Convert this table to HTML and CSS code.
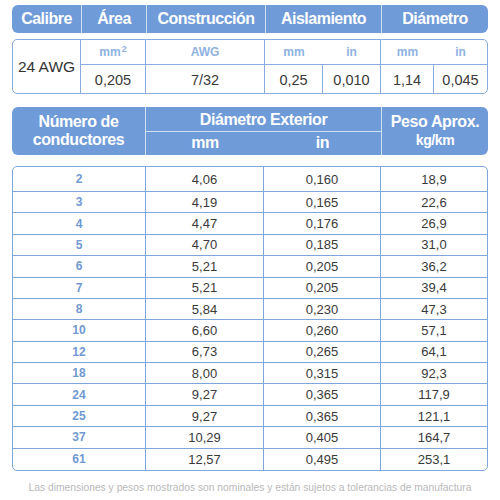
FILE: index.html
```html
<!DOCTYPE html>
<html lang="es">
<head>
<meta charset="utf-8">
<link rel="stylesheet" href="styles.css">
</head>
<body>
<div class="page">
  <div class="hdr1">
    <div class="hc">Calibre</div>
    <div class="hc sep">Área</div>
    <div class="hc sep">Construcción</div>
    <div class="hc sep">Aislamiento</div>
    <div class="hc sep">Diámetro</div>
  </div>

  <div class="spec">
    <div class="sc awg">24 AWG</div>
    <div class="sc unit"><span>mm<sup>2</sup></span></div>
    <div class="sc unit">AWG</div>
    <div class="sc unit nr">mm</div>
    <div class="sc unit">in</div>
    <div class="sc unit nr">mm</div>
    <div class="sc unit last">in</div>
    <div class="sc val bb">0,205</div>
    <div class="sc val bb">7/32</div>
    <div class="sc val bb">0,25</div>
    <div class="sc val bb">0,010</div>
    <div class="sc val bb">1,14</div>
    <div class="sc val bb last">0,045</div>
  </div>

  <div class="hdr2">
    <div class="h2 num"><div>Número de<br>conductores</div></div>
    <div class="h2 dex">Diámetro Exterior</div>
    <div class="h2 peso"><div>Peso Aprox.<br><span class="kg">kg/km</span></div></div>
    <div class="h2 sub sub-mm">mm</div>
    <div class="h2 sub sub-in">in</div>
  </div>

  <div class="body">
    <div class="bc n">2</div><div class="bc">4,06</div><div class="bc">0,160</div><div class="bc l">18,9</div>
    <div class="bc n">3</div><div class="bc">4,19</div><div class="bc">0,165</div><div class="bc l">22,6</div>
    <div class="bc n">4</div><div class="bc">4,47</div><div class="bc">0,176</div><div class="bc l">26,9</div>
    <div class="bc n">5</div><div class="bc">4,70</div><div class="bc">0,185</div><div class="bc l">31,0</div>
    <div class="bc n">6</div><div class="bc">5,21</div><div class="bc">0,205</div><div class="bc l">36,2</div>
    <div class="bc n">7</div><div class="bc">5,21</div><div class="bc">0,205</div><div class="bc l">39,4</div>
    <div class="bc n">8</div><div class="bc">5,84</div><div class="bc">0,230</div><div class="bc l">47,3</div>
    <div class="bc n">10</div><div class="bc">6,60</div><div class="bc">0,260</div><div class="bc l">57,1</div>
    <div class="bc n">12</div><div class="bc">6,73</div><div class="bc">0,265</div><div class="bc l">64,1</div>
    <div class="bc n">18</div><div class="bc">8,00</div><div class="bc">0,315</div><div class="bc l">92,3</div>
    <div class="bc n">24</div><div class="bc">9,27</div><div class="bc">0,365</div><div class="bc l">117,9</div>
    <div class="bc n">25</div><div class="bc">9,27</div><div class="bc">0,365</div><div class="bc l">121,1</div>
    <div class="bc n">37</div><div class="bc">10,29</div><div class="bc">0,405</div><div class="bc l">164,7</div>
    <div class="bc n e">61</div><div class="bc e">12,57</div><div class="bc e">0,495</div><div class="bc l e">253,1</div>
  </div>

  <p class="note">Las dimensiones y pesos mostrados son nominales y están sujetos a tolerancias de manufactura</p>
</div>
</body>
</html>
```
FILE: styles.css
```css
* { box-sizing: border-box; }
html, body { margin: 0; background: #fff; }
.page {
  width: 500px;
  padding: 5px 12px 0 12px;
  font-family: "Liberation Sans", Arial, sans-serif;
  color: #3a3a3a;
}

/* header 1 */
.hdr1 {
  display: grid;
  grid-template-columns: 69px 65px 119px 116px 1fr;
  height: 28px;
  background: #6f9bd9;
  border-radius: 6px;
  overflow: hidden;
}
.hc {
  display: flex;
  align-items: center;
  justify-content: center;
  color: #fff;
  font-weight: bold;
  font-size: 16px;
  letter-spacing: -0.5px;
}
.hc.sep { border-left: 1px solid #d2e0f4; }

/* spec box */
.spec {
  margin-top: 6px;
  height: 55px;
  border: 1px solid #88abe0;
  border-radius: 5px;
  display: grid;
  grid-template-columns: 68px 65px 119px 58px 58px 53px 1fr;
  grid-template-rows: 25px 1fr;
}
.sc {
  display: flex;
  align-items: center;
  justify-content: center;
  border-right: 1px solid #88abe0;
}
.sc.last { border-right: none; }
.sc.nr { border-right: none; }
.awg {
  grid-row: span 2;
  font-size: 15.5px;
  color: #333;
}
.unit {
  border-bottom: 1px solid #88abe0;
  color: #8fb2e2;
  font-weight: bold;
  font-size: 12px;
}
.unit sup { font-size: 9px; line-height: 0; vertical-align: 4px; margin-left: 1px; }
.val {
  font-size: 14.5px;
  color: #3a3a3a;
  padding-top: 2px;
}

/* header 2 */
.hdr2 {
  margin-top: 13px;
  height: 48px;
  display: grid;
  grid-template-columns: 134px 118px 117px 1fr;
  grid-template-rows: 25px 1fr;
  background: #6f9bd9;
  border-radius: 6px;
  overflow: hidden;
}
.h2 {
  color: #fff;
  font-weight: bold;
  font-size: 16px;
  letter-spacing: -0.4px;
  display: flex;
  align-items: center;
  justify-content: center;
  text-align: center;
}
.h2.num {
  grid-row: 1 / span 2;
  grid-column: 1;
  line-height: 18px;
  border-right: 1px solid #d2e0f4;
}
.h2.dex {
  grid-column: 2 / span 2;
  grid-row: 1;
  border-bottom: 1px solid #d2e0f4;
  padding-top: 2px;
}
.h2.peso {
  grid-column: 4;
  grid-row: 1 / span 2;
  line-height: 18px;
  border-left: 1px solid #d2e0f4;
}
.kg { font-size: 14px; }
.h2.sub { grid-row: 2; padding-bottom: 1px; }
.sub-mm { grid-column: 2; }
.sub-in { grid-column: 3; }

/* body table */
.body {
  margin-top: 11px;
  height: 305px;
  border: 1px solid #7fa5dd;
  border-radius: 5px;
  display: grid;
  grid-template-columns: 133px 118px 117px 1fr;
  grid-template-rows: 25px repeat(13, 1fr);
}
.bc {
  display: flex;
  align-items: center;
  justify-content: center;
  font-size: 13px;
  color: #3a3a3a;
  border-right: 1px solid #7fa5dd;
  border-bottom: 1px solid #7fa5dd;
}
.bc.l { border-right: none; }
.bc.e { border-bottom: none; }
.bc.n {
  color: #7199d1;
  font-weight: bold;
  font-size: 12px;
}

.note {
  margin: 11px 0 0 0;
  text-align: center;
  font-size: 10.3px;
  line-height: 12px;
  color: #b9b9b9;
  white-space: nowrap;
}
```
